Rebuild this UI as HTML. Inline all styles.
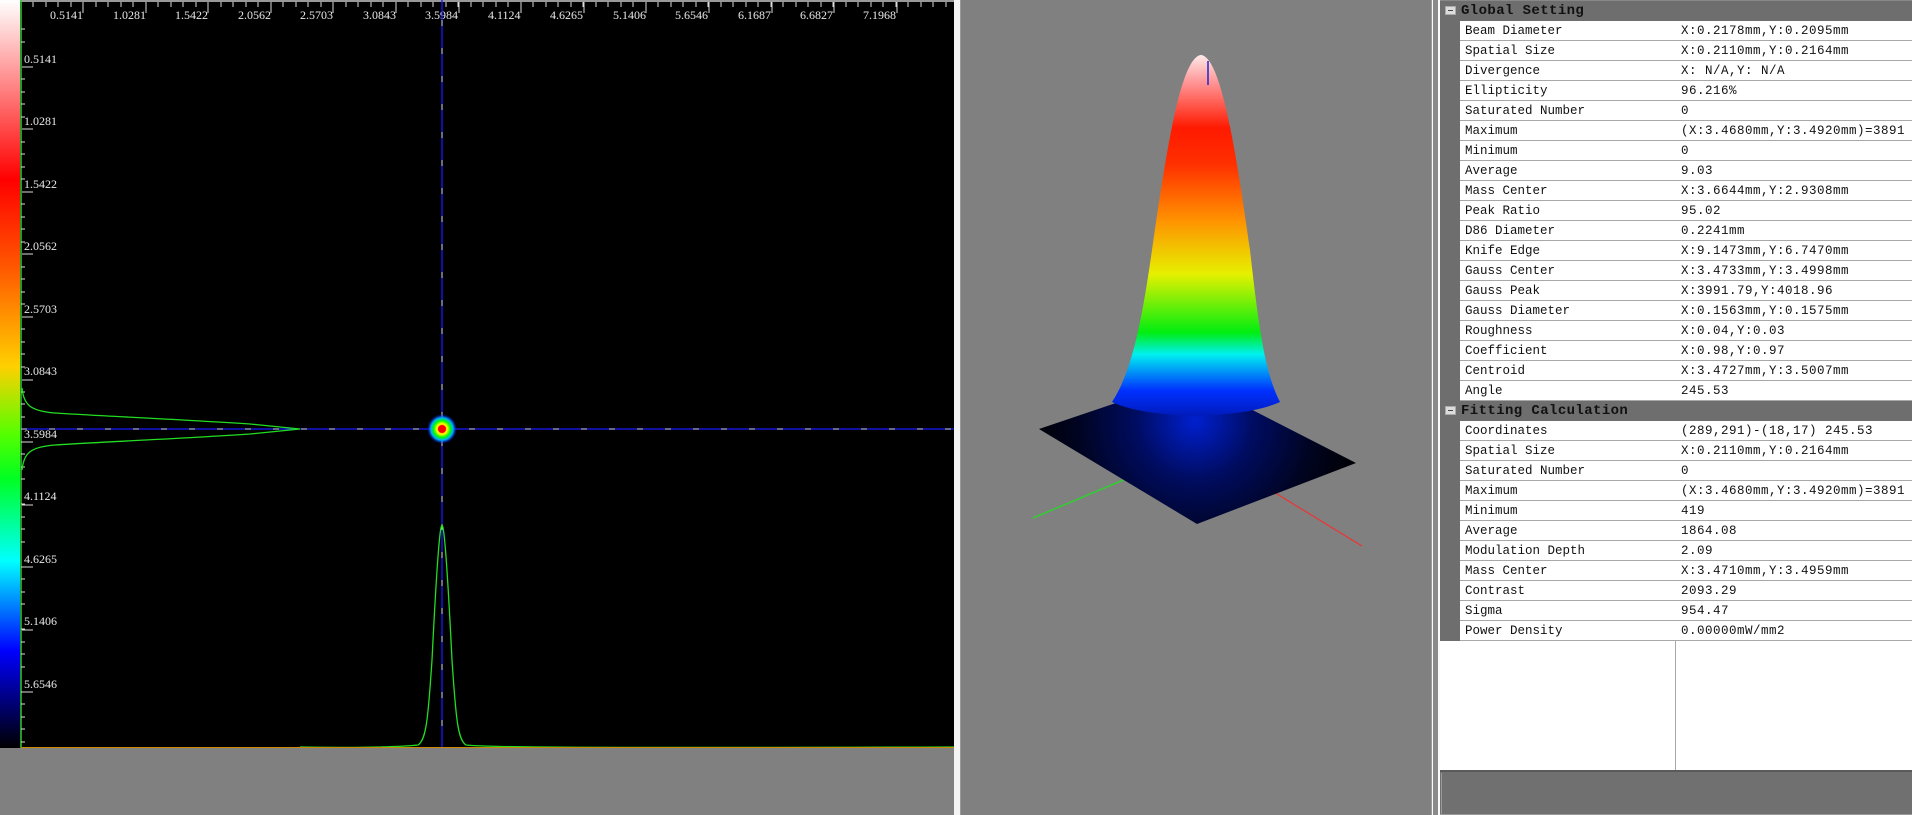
<!DOCTYPE html>
<html><head><meta charset="utf-8"><style>
*{margin:0;padding:0;box-sizing:border-box}
body{width:1912px;height:815px;background:#f0f0f0;position:relative;overflow:hidden;font-family:"Liberation Mono","Noto Sans CJK SC",monospace}
.abs{position:absolute}
.row{position:absolute;left:1460px;width:452px;height:20px;border-bottom:1px solid #a8a8a8;background:#fff;font-size:12.5px;line-height:20px;color:#111}
.row .l{position:absolute;left:5px;top:0}
.row .v{position:absolute;left:221px;top:0;white-space:nowrap;letter-spacing:0.5px}
.hdr{position:absolute;left:1440px;width:472px;height:20px;background:#6e6e6e;font:bold 14px "Liberation Mono",monospace;line-height:20px;color:#111;letter-spacing:0.4px}
.hdr span{position:absolute;left:21px}
.hdr i{position:absolute;left:5px;top:5px;width:11px;height:9px;background:#ddd;border:1px solid #aaa}
.hdr i:after{content:"";position:absolute;left:2px;top:3px;width:5px;height:1px;background:#444}
</style></head><body>
<svg class="abs" style="left:0;top:0" width="955" height="815" viewBox="0 0 955 815">
<defs><linearGradient id="cb" x1="0" y1="0" x2="0" y2="1">
<stop offset="0" stop-color="#fff"/><stop offset="0.24" stop-color="#f00"/><stop offset="0.36" stop-color="#ff5a00"/><stop offset="0.49" stop-color="#ffd000"/><stop offset="0.58" stop-color="#5f0"/><stop offset="0.64" stop-color="#0f2"/><stop offset="0.75" stop-color="#0ff"/><stop offset="0.87" stop-color="#00f"/><stop offset="1" stop-color="#000"/></linearGradient>
<radialGradient id="sp"><stop offset="0" stop-color="#f00"/><stop offset="0.35" stop-color="#ff0"/><stop offset="0.55" stop-color="#0f0"/><stop offset="0.75" stop-color="#0af"/><stop offset="1" stop-color="#00f" stop-opacity="0"/></radialGradient></defs>
<rect x="0" y="0" width="955" height="815" fill="#808080"/>
<rect x="0" y="0" width="954" height="748" fill="#000"/>
<rect x="0" y="0" width="954" height="2" fill="#999"/>
<rect x="0" y="0" width="20" height="748" fill="url(#cb)"/>
<line x1="21" y1="0" x2="21" y2="748" stroke="#3c3" stroke-width="1.5"/>
<g stroke="#ddd" stroke-width="1">
<path d="M33 2v5M46 2v5M58 2v5M71 2v5M83 2v5M96 2v5M108 2v5M121 2v5M133 2v5M146 2v5M158 2v5M171 2v5M183 2v5M196 2v5M208 2v5M221 2v5M233 2v5M246 2v5M258 2v5M271 2v5M283 2v5M296 2v5M308 2v5M321 2v5M333 2v5M346 2v5M358 2v5M371 2v5M383 2v5M396 2v5M408 2v5M421 2v5M433 2v5M446 2v5M458 2v5M471 2v5M483 2v5M496 2v5M508 2v5M521 2v5M533 2v5M546 2v5M558 2v5M571 2v5M583 2v5M596 2v5M608 2v5M621 2v5M633 2v5M646 2v5M658 2v5M671 2v5M683 2v5M696 2v5M708 2v5M721 2v5M733 2v5M746 2v5M758 2v5M771 2v5M783 2v5M796 2v5M808 2v5M821 2v5M833 2v5M846 2v5M858 2v5M871 2v5M883 2v5M896 2v5M908 2v5M921 2v5M933 2v5M946 2v5"/>
<path d="M83 2v11M146 2v11M208 2v11M271 2v11M333 2v11M396 2v11M459 2v11M521 2v11M584 2v11M646 2v11M709 2v11M772 2v11M834 2v11M897 2v11"/>
</g>
<g stroke="#ddd"><path d="M21 29h4M21 42h4M21 79h4M21 92h4M21 104h4M21 117h4M21 142h4M21 154h4M21 167h4M21 179h4M21 204h4M21 217h4M21 229h4M21 242h4M21 267h4M21 279h4M21 292h4M21 304h4M21 329h4M21 342h4M21 354h4M21 367h4M21 392h4M21 404h4M21 417h4M21 442h4M21 454h4M21 467h4M21 479h4M21 504h4M21 517h4M21 529h4M21 542h4M21 567h4M21 579h4M21 592h4M21 604h4M21 629h4M21 642h4M21 654h4M21 667h4M21 692h4M21 704h4M21 717h4M21 729h4M21 742h4"/>
<path d="M22 67h11M22 129h11M22 192h11M22 254h11M22 317h11M22 380h11M22 442h11M22 505h11M22 567h11M22 630h11M22 692h11"/></g>
<g fill="#e8e8e8" font-family="Liberation Serif,serif" font-size="12">
<text x="50" y="19">0.5141</text><text x="113" y="19">1.0281</text><text x="175" y="19">1.5422</text><text x="238" y="19">2.0562</text><text x="300" y="19">2.5703</text><text x="363" y="19">3.0843</text><text x="425" y="19">3.5984</text><text x="488" y="19">4.1124</text><text x="550" y="19">4.6265</text><text x="613" y="19">5.1406</text><text x="675" y="19">5.6546</text><text x="738" y="19">6.1687</text><text x="800" y="19">6.6827</text><text x="863" y="19">7.1968</text>
<text x="24" y="63">0.5141</text><text x="24" y="125">1.0281</text><text x="24" y="188">1.5422</text><text x="24" y="250">2.0562</text><text x="24" y="313">2.5703</text><text x="24" y="375">3.0843</text><text x="24" y="438">3.5984</text><text x="24" y="500">4.1124</text><text x="24" y="563">4.6265</text><text x="24" y="625">5.1406</text><text x="24" y="688">5.6546</text>
</g>
<line x1="21" y1="429" x2="954" y2="429" stroke="#1a1aff" stroke-width="1.3"/>
<line x1="442" y1="0" x2="442" y2="748" stroke="#1a1aff" stroke-width="1.3"/>
<line x1="21" y1="429" x2="954" y2="429" stroke="#ccc" stroke-dasharray="6 22" stroke-width="1"/>
<line x1="442" y1="20" x2="442" y2="748" stroke="#ccc" stroke-dasharray="6 22" stroke-width="1"/>
<circle cx="442" cy="429" r="15" fill="url(#sp)"/>
<circle cx="442" cy="429" r="4" fill="#f00"/>
<path d="M22 388 C24 405 30 411 55 413 C100 416 175 419 250 424 L300 429 L250 434 C175 439 100 442 55 445 C30 447 24 453 22 470" fill="none" stroke="#2d2" stroke-width="1.3"/>
<path d="M300 747 C350 748 400 747 418 745 C426 740 428 720 432 660 C437 560 440 525 442 525 C444 525 447 560 452 660 C456 720 458 740 466 745 C484 747 540 748 954 747" fill="none" stroke="#2d2" stroke-width="1.3"/>
<line x1="21" y1="747.5" x2="954" y2="747.5" stroke="#c80" stroke-width="1"/>
</svg>
<div class="abs" style="left:954px;top:0;width:7px;height:815px;background:#f4f4f4;border-right:1px solid #999"></div>
<svg class="abs" style="left:961px;top:0" width="470" height="815" viewBox="961 0 470 815">
<defs>
<linearGradient id="pk" x1="0" y1="55" x2="0" y2="420" gradientUnits="userSpaceOnUse">
<stop offset="0" stop-color="#ffe8e8"/><stop offset="0.08" stop-color="#ff9090"/><stop offset="0.2" stop-color="#ff1a00"/><stop offset="0.3" stop-color="#ff3000"/><stop offset="0.45" stop-color="#ff9000"/><stop offset="0.6" stop-color="#e6f000"/><stop offset="0.76" stop-color="#00ee10"/><stop offset="0.82" stop-color="#00f0f0"/><stop offset="0.92" stop-color="#0030ff"/><stop offset="1" stop-color="#0018b0"/></linearGradient>
<radialGradient id="bs" cx="1195" cy="420" r="170" gradientUnits="userSpaceOnUse"><stop offset="0" stop-color="#0020d0"/><stop offset="0.35" stop-color="#000c60"/><stop offset="0.7" stop-color="#000420"/><stop offset="1" stop-color="#000"/></radialGradient>
</defs>
<rect x="961" y="0" width="470" height="815" fill="#808080"/>
<line x1="1033" y1="518" x2="1128" y2="478" stroke="#3c3" stroke-width="1.5"/>
<line x1="1272" y1="491" x2="1362" y2="546" stroke="#e33" stroke-width="1.2"/>
<polygon points="1039,429 1190,378 1356,463 1197,524" fill="url(#bs)"/>
<path d="M1112 402 C1132 372 1142 320 1152 250 C1165 160 1180 57 1201 55 C1222 57 1237 160 1250 250 C1258 320 1264 372 1280 402 C1240 420 1150 420 1112 402 Z" fill="url(#pk)"/>
<line x1="1208" y1="61" x2="1208" y2="85" stroke="#22c" stroke-width="1.5"/>
</svg>
<div class="abs" style="left:1431px;top:0;width:9px;height:815px;background:#fafafa;border-left:1px solid #999"></div>
<div class="abs" style="left:1433px;top:0;width:5px;height:815px;background:#8a8a8a"></div>
<div class="abs" style="left:1440px;top:0;width:472px;height:815px;background:#fff"></div>
<div class="abs" style="left:1440px;top:0;width:472px;height:1px;background:#888"></div>
<div class="abs" style="left:1440px;top:1px;width:20px;height:640px;background:#6e6e6e"></div>
<div class="abs" style="left:1675px;top:1px;width:1px;height:769px;background:#a8a8a8"></div>
<div class="hdr" style="top:1px"><i></i><span>Global Setting</span></div>
<div class="row" style="top:21px"><span class="l">Beam Diameter</span><span class="v">X:0.2178mm,Y:0.2095mm</span></div>
<div class="row" style="top:41px"><span class="l">Spatial Size</span><span class="v">X:0.2110mm,Y:0.2164mm</span></div>
<div class="row" style="top:61px"><span class="l">Divergence</span><span class="v">X: N/A,Y: N/A</span></div>
<div class="row" style="top:81px"><span class="l">Ellipticity</span><span class="v">96.216%</span></div>
<div class="row" style="top:101px"><span class="l">Saturated Number</span><span class="v">0</span></div>
<div class="row" style="top:121px"><span class="l">Maximum</span><span class="v">(X:3.4680mm,Y:3.4920mm)=3891</span></div>
<div class="row" style="top:141px"><span class="l">Minimum</span><span class="v">0</span></div>
<div class="row" style="top:161px"><span class="l">Average</span><span class="v">9.03</span></div>
<div class="row" style="top:181px"><span class="l">Mass Center</span><span class="v">X:3.6644mm,Y:2.9308mm</span></div>
<div class="row" style="top:201px"><span class="l">Peak Ratio</span><span class="v">95.02</span></div>
<div class="row" style="top:221px"><span class="l">D86 Diameter</span><span class="v">0.2241mm</span></div>
<div class="row" style="top:241px"><span class="l">Knife Edge</span><span class="v">X:9.1473mm,Y:6.7470mm</span></div>
<div class="row" style="top:261px"><span class="l">Gauss Center</span><span class="v">X:3.4733mm,Y:3.4998mm</span></div>
<div class="row" style="top:281px"><span class="l">Gauss Peak</span><span class="v">X:3991.79,Y:4018.96</span></div>
<div class="row" style="top:301px"><span class="l">Gauss Diameter</span><span class="v">X:0.1563mm,Y:0.1575mm</span></div>
<div class="row" style="top:321px"><span class="l">Roughness</span><span class="v">X:0.04,Y:0.03</span></div>
<div class="row" style="top:341px"><span class="l">Coefficient</span><span class="v">X:0.98,Y:0.97</span></div>
<div class="row" style="top:361px"><span class="l">Centroid</span><span class="v">X:3.4727mm,Y:3.5007mm</span></div>
<div class="row" style="top:381px"><span class="l">Angle</span><span class="v">245.53</span></div>
<div class="hdr" style="top:401px"><i></i><span>Fitting Calculation</span></div>
<div class="row" style="top:421px"><span class="l">Coordinates</span><span class="v">(289,291)-(18,17) 245.53</span></div>
<div class="row" style="top:441px"><span class="l">Spatial Size</span><span class="v">X:0.2110mm,Y:0.2164mm</span></div>
<div class="row" style="top:461px"><span class="l">Saturated Number</span><span class="v">0</span></div>
<div class="row" style="top:481px"><span class="l">Maximum</span><span class="v">(X:3.4680mm,Y:3.4920mm)=3891</span></div>
<div class="row" style="top:501px"><span class="l">Minimum</span><span class="v">419</span></div>
<div class="row" style="top:521px"><span class="l">Average</span><span class="v">1864.08</span></div>
<div class="row" style="top:541px"><span class="l">Modulation Depth</span><span class="v">2.09</span></div>
<div class="row" style="top:561px"><span class="l">Mass Center</span><span class="v">X:3.4710mm,Y:3.4959mm</span></div>
<div class="row" style="top:581px"><span class="l">Contrast</span><span class="v">2093.29</span></div>
<div class="row" style="top:601px"><span class="l">Sigma</span><span class="v">954.47</span></div>
<div class="row" style="top:621px"><span class="l">Power Density</span><span class="v">0.00000mW/mm2</span></div>
<div class="abs" style="left:1440px;top:770px;width:472px;height:45px;background:#707070;border-top:2px solid #5a5a5a;box-shadow:inset 0 -1px 0 #999"></div>
<div class="abs" style="left:1441px;top:773px;width:1px;height:42px;background:#999"></div>
</body></html>
